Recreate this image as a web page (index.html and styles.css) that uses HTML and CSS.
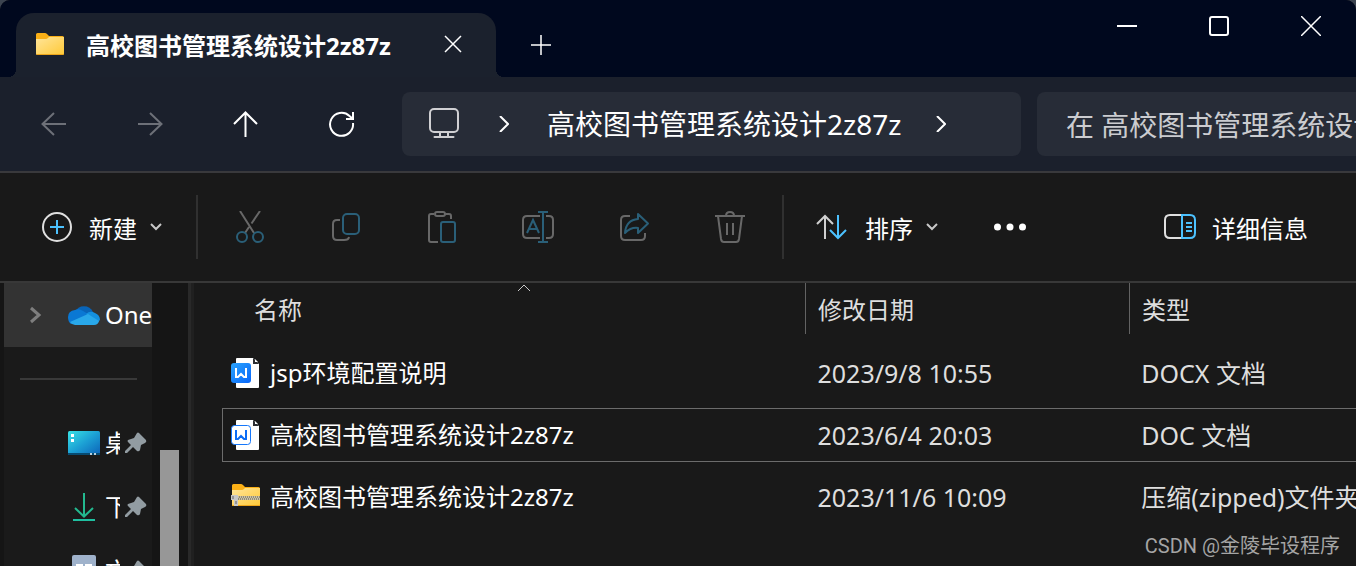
FILE: index.html
```html
<!DOCTYPE html>
<html lang="zh-CN">
<head>
<meta charset="utf-8">
<title>高校图书管理系统设计2z87z</title>
<link rel="stylesheet" href="styles.css">
</head>
<body>
<div class="window">
  <header class="titlebar">
    <div class="tab">
      <svg class="tab-icon" width="30" height="24" viewBox="0 0 30 24">
        <defs><linearGradient id="folder" x1="0" y1="0" x2="1" y2="1"><stop offset="0" stop-color="#ffe59a"/><stop offset="1" stop-color="#ffc937"/></linearGradient></defs>
        <path d="M1 2.500Q1 1 2.500 1H10Q11 1 12 2L14 4H27.500Q29 4 29 5.500V12H1Z" fill="#fbb016"/>
        <path d="M1 7H11Q12 7 13 6L14 5H29V21.500Q29 23 27.500 23H2.500Q1 23 1 21.500Z" fill="url(#folder)"/>
        <path d="M1.500 22.500H28.500" stroke="#eda51a"/>
      </svg>
      <span class="tab-title">高校图书管理系统设计2z87z</span>
      <button class="tab-close" aria-label="关闭标签页"><svg width="18" height="18" viewBox="0 0 18 18"><path d="M1 1L17 17M17 1L1 17" stroke="#fff" stroke-width="1.500"/></svg></button>
    </div>
    <button class="tab-add" aria-label="新建标签页"><svg width="20" height="20" viewBox="0 0 20 20"><path d="M0 10H20M10 0V20" stroke="#fff" stroke-width="1.500"/></svg></button>
    <div class="controls">
      <button aria-label="最小化"><svg width="20" height="20" viewBox="0 0 20 20"><path d="M0 10H20" stroke="#fff" stroke-width="2"/></svg></button>
      <button aria-label="最大化"><svg width="20" height="20" viewBox="0 0 20 20"><rect x="1" y="1" width="18" height="18" rx="2" fill="none" stroke="#fff" stroke-width="2"/></svg></button>
      <button aria-label="关闭"><svg width="20" height="20" viewBox="0 0 20 20"><path d="M0 0L20 20M20 0L0 20" stroke="#fff" stroke-width="1.500"/></svg></button>
    </div>
  </header>

  <nav class="navbar">
    <div class="nav-buttons">
      <button aria-label="后退" disabled><svg width="26" height="26" viewBox="0 0 26 26"><path d="M25 13H1M13 2L1.500 13L13 24"/></svg></button>
      <button aria-label="前进" disabled><svg width="26" height="26" viewBox="0 0 26 26"><path d="M1 13H25M13 2L24.500 13L13 24"/></svg></button>
      <button aria-label="上移"><svg width="26" height="26" viewBox="0 0 26 26"><path d="M12.500 26V2M1 13L12.500 1.500L24 13"/></svg></button>
      <button aria-label="刷新"><svg width="26" height="26" viewBox="0 0 26 26"><path d="M24 12A11.500 11.500 0 1 1 20.500 5L24 8M24 1V8H17"/></svg></button>
    </div>
    <div class="address">
      <svg class="pc" width="32" height="32" viewBox="0 0 32 32" fill="none" stroke="#d0d0d3" stroke-width="2"><rect x="2" y="2" width="28" height="23" rx="4"/><path d="M12 25V30M20 25V30M6.500 30H25.500" stroke-linecap="round"/></svg>
      <svg width="10" height="16" viewBox="0 0 10 16"><path d="M1 0L9 8L1 16" fill="none" stroke="#fff" stroke-width="2"/></svg>
      <button class="crumb">高校图书管理系统设计2z87z</button>
      <svg width="10" height="16" viewBox="0 0 10 16"><path d="M1 0L9 8L1 16" fill="none" stroke="#fff" stroke-width="2"/></svg>
    </div>
    <input class="search" type="text" aria-label="搜索" placeholder="在 高校图书管理系统设计2z87z 中搜索">
  </nav>

  <div class="toolbar">
    <button class="labelled new">
      <svg width="30" height="30" viewBox="0 0 30 30" fill="none"><circle cx="15" cy="15" r="14" stroke="#e0e0e0" stroke-width="2"/><path d="M8 15H22M15 8V22" stroke="#4cc2ff" stroke-width="2"/></svg>
      <span>新建</span>
      <svg class="caret" width="12" height="8" viewBox="0 0 12 8"><path d="M1 1L6 6L11 1"/></svg>
    </button>
    <div class="tools">
      <button aria-label="剪切" disabled><svg width="32" height="32" viewBox="0 0 32 32"><g class="grey"><path d="M6 0L20 22M26 0L17.500 12.500M15 16L11 22"/></g><g class="blue"><circle cx="8" cy="26" r="5"/><circle cx="24" cy="26" r="5"/></g></svg></button>
      <button aria-label="复制" disabled><svg width="32" height="32" viewBox="0 0 32 32"><path class="grey" d="M10 9H7Q3 9 3 13V25Q3 29 7 29H14Q18.500 29 19 26"/><rect class="blue" x="13" y="3" width="16" height="20" rx="4"/></svg></button>
      <button aria-label="粘贴" disabled><svg width="32" height="32" viewBox="0 0 32 32"><g class="grey"><path d="M8 3H5Q3 3 3 5V29Q3 31 5 31H12M18 3H23Q25 3 25 5V8"/><rect x="9" y="1" width="10" height="4" rx="2"/></g><rect class="blue" x="15" y="11" width="14" height="20" rx="2"/></svg></button>
      <button aria-label="重命名" disabled><svg width="32" height="32" viewBox="0 0 32 32"><path class="grey" d="M18 5H5Q1 5 1 9V23Q1 27 5 27H18M24 5H27Q31 5 31 9V23Q31 27 27 27H24"/><g class="blue"><path d="M16 1H26M21 1V31M16 31H26M5 22L11 9L17 22M7 18H15"/></g></svg></button>
      <button aria-label="共享" disabled><svg width="32" height="32" viewBox="0 0 32 32"><path class="grey" d="M12 5H7Q3 5 3 9V25Q3 29 7 29H23Q27 29 27 25V22"/><path class="blue" d="M20 3L30 12.500L20 22V17Q13 16 7 22Q8 9 20 8Z" stroke-linejoin="round"/></svg></button>
      <button aria-label="删除" disabled><svg width="32" height="32" viewBox="0 0 32 32"><g class="grey"><path d="M1 5H31M12 5Q12 1 16 1T20 5M4 5L7 28Q7.500 31 10 31H22Q24.500 31 25 28L28 5M13 12V24M19 12V24"/></g></svg></button>
    </div>
    <button class="labelled sort">
      <svg width="32" height="32" viewBox="0 0 32 32" fill="none" stroke-width="2"><path d="M9 28V5M1 13L9 5L17 13" stroke="#d0d0d0"/><path d="M22 4V27M14 19L22 27L30 19" stroke="#4cc2ff"/></svg>
      <span>排序</span>
      <svg class="caret" width="12" height="8" viewBox="0 0 12 8"><path d="M1 1L6 6L11 1"/></svg>
    </button>
    <button class="more" aria-label="查看更多"><svg width="32" height="8" viewBox="0 0 32 8" fill="#fff"><circle cx="3.500" cy="4" r="3.500"/><circle cx="16" cy="4" r="3.500"/><circle cx="28.500" cy="4" r="3.500"/></svg></button>
    <button class="labelled details">
      <svg width="32" height="28" viewBox="0 0 32 28" fill="none" stroke-width="2"><path d="M19 2H6Q1 2 1 7V20Q1 25 6 25H19" stroke="#e0e0e0"/><path d="M18 2H26Q31 2 31 7V20Q31 25 26 25H18ZM22 10H28M22 14H28M22 18H28" stroke="#4cc2ff"/></svg>
      <span>详细信息</span>
    </button>
  </div>

  <div class="content">
    <aside class="sidebar">
      <div class="tree">
        <a class="drive" href="#">
          <svg class="expand" width="14" height="18" viewBox="0 0 14 18"><path d="M3 2L11 9L3 16" fill="none" stroke="#7e7e7e" stroke-width="3"/></svg>
          <svg width="32" height="22" viewBox="0 0 32 22"><path d="M7 8A10 10 0 0 1 25 8L21 16L8 10Z" fill="#0864b8"/><path d="M7 6Q11 4 15 7L25 13L3 20Q0 18 0 13Q0 7 7 6Z" fill="#0a78d4"/><path d="M18 10Q22 6 27 9Q32 11 32 16L29 19Z" fill="#1490df"/><path d="M2 18L20 10L31 17Q30 21 26 21H7Q4 21 2 18Z" fill="#29a8ea"/></svg>
          <span>OneDrive</span>
        </a>
        <hr>
        <a class="place" href="#">
          <svg width="32" height="24" viewBox="0 0 32 24"><defs><linearGradient id="desk" x1="0" y1="0" x2="1" y2="1"><stop offset="0" stop-color="#38e2e6"/><stop offset=".5" stop-color="#1ca0d4"/><stop offset="1" stop-color="#0c62b8"/></linearGradient></defs><rect width="32" height="24" rx="1.500" fill="url(#desk)"/><path d="M0 22H32V23Q32 24 31 24H1Q0 24 0 23Z" fill="#074a70"/><path d="M3 3H6V6H3ZM3 8H6V11H3Z" fill="#fff"/><path d="M22 22H24V24H22ZM26 22H28V24H26Z" fill="#b9d0df"/></svg>
          <span>桌面</span>
          <svg class="pin" width="22" height="22" viewBox="0 0 22 22"><path d="M12 1Q13 0 14 1L21 8Q22 10 20 11L16 13L15 18Q14 20 12 19L8 15L2 21H0V19L6 13L3 10Q2 9 3 8L9 6Z"/></svg>
        </a>
        <a class="place" href="#">
          <svg width="32" height="28" viewBox="0 0 32 28" fill="none" stroke-width="2"><path d="M16 0V23M7 15L16 23.500L25 15" stroke="#23b98f"/><path d="M5 27H27" stroke="#1fbfa0"/></svg>
          <span>下载</span>
          <svg class="pin" width="22" height="22" viewBox="0 0 22 22"><path d="M12 1Q13 0 14 1L21 8Q22 10 20 11L16 13L15 18Q14 20 12 19L8 15L2 21H0V19L6 13L3 10Q2 9 3 8L9 6Z"/></svg>
        </a>
        <a class="place" href="#">
          <svg width="32" height="32" viewBox="0 0 32 32"><rect x="4" width="24" height="32" rx="2" fill="#9fb2cb"/><path d="M8 9H15V15H8ZM17 9H24V11H17ZM17 13H24V15H17ZM8 19H24V21H8Z" fill="#fff"/></svg>
          <span>文档</span>
          <svg class="pin" width="22" height="22" viewBox="0 0 22 22"><path d="M12 1Q13 0 14 1L21 8Q22 10 20 11L16 13L15 18Q14 20 12 19L8 15L2 21H0V19L6 13L3 10Q2 9 3 8L9 6Z"/></svg>
        </a>
      </div>
      <div class="scroll"><div class="thumb"></div></div>
    </aside>

    <main class="files">
      <table>
        <thead>
          <tr><th>名称<svg class="sorted" width="14" height="8" viewBox="0 0 14 8"><path d="M1 7L7 1L13 7" fill="none" stroke="#c8c8c8"/></svg></th><th>修改日期</th><th>类型</th></tr>
        </thead>
        <tbody>
          <tr>
            <td class="name"><svg width="30" height="32" viewBox="0 0 30 32"><defs><linearGradient id="wps" x1="0" y1="0" x2="1" y2="1"><stop offset="0" stop-color="#2ba4fc"/><stop offset="1" stop-color="#0866fa"/></linearGradient></defs><path d="M5 2Q5 1 6 1H22L28 7V30Q28 31 27 31H6Q5 31 5 30Z" fill="#fff"/><path d="M22 1V7H28Z" fill="#2a2c30"/><path d="M24 2V5H27Z" fill="#fff"/><rect y="6" width="20" height="20" rx="3" fill="url(#wps)"/><path d="M5 11V20H7L10 17L13 20H15V11" fill="none" stroke="#fff" stroke-width="2"/></svg>jsp环境配置说明</td>
            <td class="date">2023/9/8 10:55</td><td>DOCX 文档</td>
          </tr>
          <tr class="focused">
            <td class="name"><svg width="30" height="32" viewBox="0 0 30 32"><path d="M5 2Q5 1 6 1H22L28 7V30Q28 31 27 31H6Q5 31 5 30Z" fill="#fff"/><path d="M22 1V7H28Z" fill="#2a2c30"/><path d="M24 2V5H27Z" fill="#fff"/><rect x=".5" y="6.500" width="19" height="19" rx="3" fill="#fff" stroke="#1677fa"/><path d="M5 11V20H7L10 17L13 20H15V11" fill="none" stroke="#0b6cf5" stroke-width="2"/></svg>高校图书管理系统设计2z87z</td>
            <td class="date">2023/6/4 20:03</td><td>DOC 文档</td>
          </tr>
          <tr>
            <td class="name"><svg class="zip" width="30" height="24" viewBox="0 0 30 24"><path d="M1 2.500Q1 1 2.500 1H10Q11 1 12 2L14 4H27.500Q29 4 29 5.500V12H1Z" fill="#fbb016"/><path d="M1 7H11Q12 7 13 6L14 5H29V21.500Q29 23 27.500 23H2.500Q1 23 1 21.500Z" fill="url(#folder)"/><path d="M1 22.500H29" stroke="#eda51a"/><rect x="7" y="13" width="22" height="4" fill="#c9c2a8"/><path d="M8 14H29M7 16H29" stroke="#5e573f" stroke-dasharray="1 1"/><path d="M0 12H7V23H3V17H0Z" fill="#c8c8c8"/><path d="M2 13V16M5 18V21" stroke="#626262"/></svg>高校图书管理系统设计2z87z</td>
            <td class="date">2023/11/6 10:09</td><td>压缩(zipped)文件夹</td>
          </tr>
        </tbody>
      </table>
    </main>
  </div>
  <div class="watermark">CSDN @金陵毕设程序</div>
</div>
</body>
</html>
```
FILE: styles.css
```css
* { box-sizing: border-box; }

body {
  margin: 0;
  background: #3c4450;
  color: #fff;
  font-family: "Noto Sans", "Noto Sans CJK SC", sans-serif;
  font-size: 24px;
  line-height: 32px;
}

button {
  display: flex;
  align-items: center;
  justify-content: center;
  padding: 0;
  border: 0;
  background: none;
  color: inherit;
  font: inherit;
}

svg { display: block; flex: none; }

.window {
  position: relative;
  display: flex;
  flex-direction: column;
  height: 100vh;
  overflow: hidden;
  border-radius: 10px 10px 0 0;
  background: #191919;
}

/* Title bar */
.titlebar {
  display: flex;
  padding: 13px 0 0 16px;
  background: #00081e;
}

.tab {
  position: relative;
  display: flex;
  align-items: center;
  width: 480px;
  height: 64px;
  padding: 0 34px 2px 19px;
  border-radius: 18px 18px 0 0;
  background: #1b212d;
}

.tab::before,
.tab::after {
  content: "";
  position: absolute;
  bottom: 0;
  width: 8px;
  height: 8px;
}

.tab::before {
  right: 100%;
  background: radial-gradient(circle at 0 0, transparent 8px, #1b212d 8px);
}

.tab::after {
  left: 100%;
  background: radial-gradient(circle at 100% 0, transparent 8px, #1b212d 8px);
}

.tab-title {
  flex: 1;
  padding: 4px 0 0 21px;
  font-weight: 700;
  white-space: nowrap;
}

.tab-add { width: 90px; height: 64px; }

.controls {
  display: flex;
  gap: 72px;
  margin-left: auto;
  padding-right: 35px;
}

.controls button { width: 20px; height: 26px; }

/* Navigation */
.navbar {
  display: flex;
  padding: 15px 0 15px 6px;
  border-bottom: 2px solid #39393c;
  background: #1b202c;
}

.nav-buttons { display: flex; margin-right: 12px; }
.nav-buttons button { width: 96px; height: 64px; }
.nav-buttons path { fill: none; stroke: #fff; stroke-width: 2; }
.nav-buttons button:disabled path { stroke: #6d7078; }

.address {
  display: flex;
  flex: 593 1 0;
  align-items: center;
  min-width: 0;
  margin-right: 16px;
  padding-left: 26px;
  border-radius: 8px;
  background: #272c37;
  font-size: 28px;
}

.pc { margin: 0 39px 2px 0; }
.crumb { margin: 0 35px 0 38px; white-space: nowrap; }

.search {
  flex: 290 1 0;
  min-width: 0;
  padding: 2px 0 0 29px;
  border: 0;
  border-radius: 8px 0 0 8px;
  background: #272c37;
  color: #fff;
  font: inherit;
  font-size: 28px;
}

.search::placeholder { color: #cbccd0; opacity: 1; }

/* Command bar */
.toolbar {
  display: flex;
  align-items: center;
  height: 110px;
  flex: none;
  padding: 0 48px 0 42px;
  border-bottom: 2px solid #383838;
}

.labelled { gap: 17px; }
.labelled span { padding-top: 4px; white-space: nowrap; }
.caret { margin-left: -4px; }
.caret path { fill: none; stroke: #c8c8c8; stroke-width: 2; }

.tools {
  display: flex;
  align-items: center;
  gap: 64px;
  height: 64px;
  margin: 0 32px 0 34px;
  padding: 0 36px;
  border: solid #303030;
  border-width: 0 2px;
}

.grey, .blue { fill: none; stroke-width: 2; }
.grey { stroke: #686868; }
.blue { stroke: #2a5f78; }

.more { margin-left: 56px; }
.details { gap: 16px; margin-left: auto; }

/* Content */
.content { display: flex; flex: 1; min-height: 0; overflow: hidden; }

.sidebar {
  display: flex;
  flex: none;
  width: 194px;
  padding-left: 4px;
  border-right: 3px solid #202020;
  background: #151515;
}

.tree { width: 148px; overflow: hidden; background: #1a1a1a; }
.tree a { display: flex; align-items: center; height: 64px; color: #fff; text-decoration: none; }
.drive { padding-left: 24px; background: #333; }
.expand { margin-right: 26px; }
.drive span { margin-left: 5px; }

.tree hr {
  height: 2px;
  margin: 31px 15px 31px 16px;
  border: 0;
  background: #393939;
}

.place { padding-left: 64px; }
.place span { width: 15px; margin: 0 5px; overflow: hidden; white-space: nowrap; }
.pin path { fill: #929ca2; }

.scroll {
  display: flex;
  flex: 1;
  padding: 167px 9px 0 8px;
  border-right: 3px solid #292929;
}

.thumb { flex: 1; background: #979797; }

.files { flex: 1; min-width: 0; padding-left: 28px; overflow: hidden; }

table, thead, tbody { display: block; }
tr { display: grid; grid-template-columns: 583fr 324fr 227fr; }
th, td { min-width: 0; padding: 0; white-space: nowrap; font-weight: 400; text-align: left; }

thead { margin-bottom: 12px; }

th {
  position: relative;
  height: 51px;
  padding: 12px 0 0 12px;
  border-left: 1px solid #636363;
  color: #dedede;
  line-height: 30px;
}

th:first-child { padding-left: 32px; border-left: 0; }

.sorted { position: absolute; top: 1px; left: calc(50% + 3px); }

tbody tr {
  height: 54px;
  margin-bottom: 8px;
  border: 1px solid transparent;
  border-right: 0;
}

.focused { border-color: #6c6c6c; }

td {
  display: flex;
  align-items: center;
  padding-left: 12px;
  color: #dedede;
  font-size: 25px;
}

.name { gap: 9px; padding-left: 8px; color: #fff; font-size: 24px; }
.zip { margin-bottom: 4px; }

.watermark {
  position: absolute;
  right: 16px;
  bottom: 4px;
  color: #a5a5a5;
  font-family: Roboto, "Noto Sans CJK SC", sans-serif;
  font-size: 20px;
}
```
